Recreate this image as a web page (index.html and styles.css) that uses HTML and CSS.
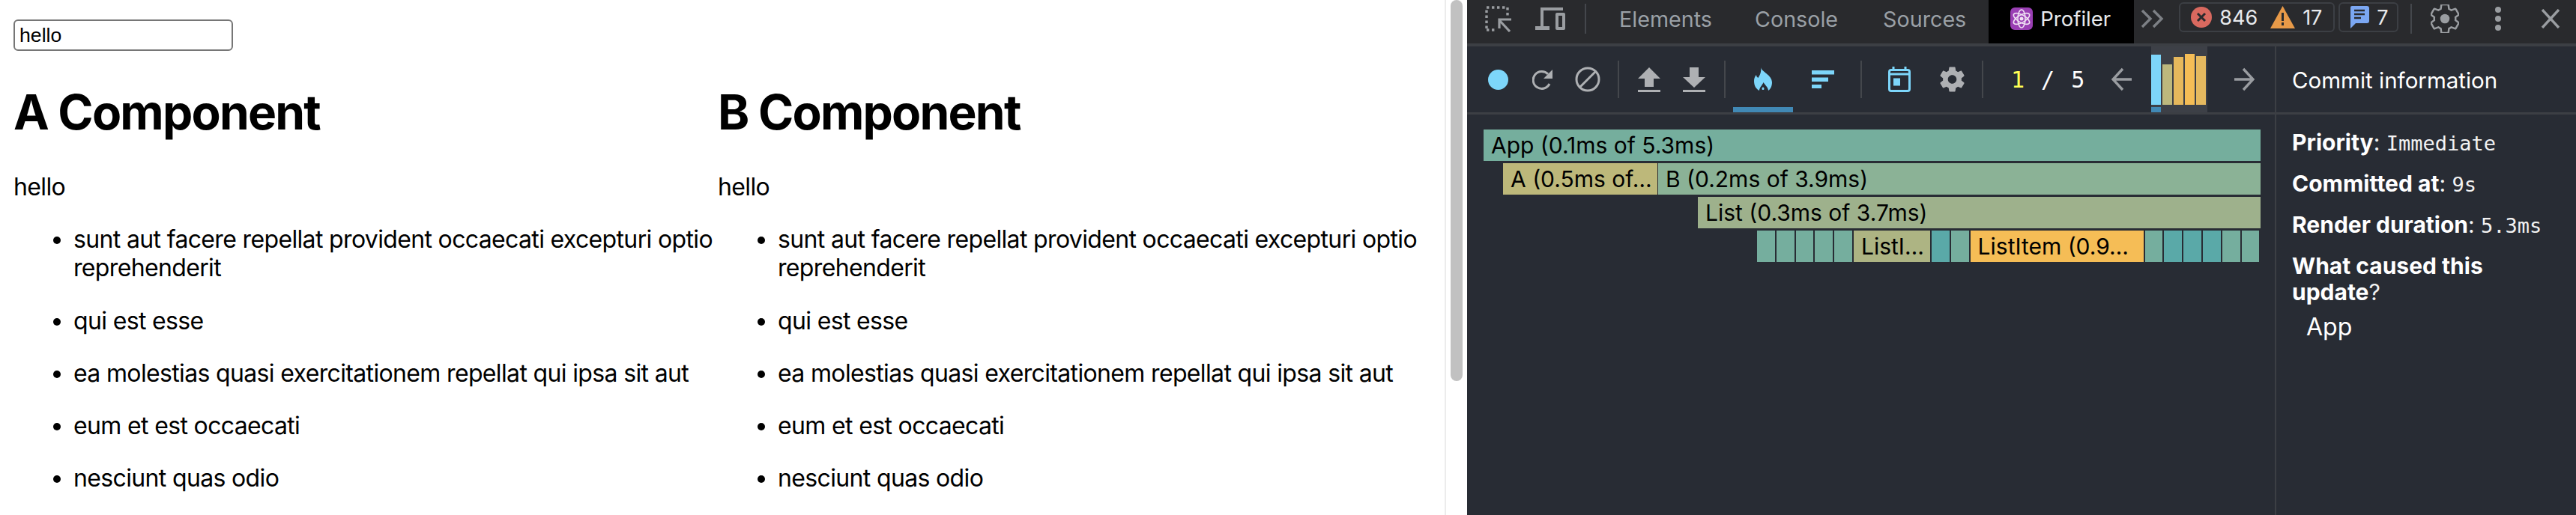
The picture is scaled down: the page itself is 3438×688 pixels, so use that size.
FILE: index.html
```html
<!DOCTYPE html>
<html lang="en">
<head>
  <meta charset="UTF-8">
  <title>Profiler</title>
  <link rel="stylesheet" href="styles.css">
</head>
<body>
<main class="page">
  <input class="search" type="text" value="hello">
  <div class="columns">
    <section>
      <h1>A Component</h1>
      <p>hello</p>
      <ul>
        <li><p>sunt aut facere repellat provident occaecati excepturi optio reprehenderit</p></li>
        <li><p>qui est esse</p></li>
        <li><p>ea molestias quasi exercitationem repellat qui ipsa sit aut</p></li>
        <li><p>eum et est occaecati</p></li>
        <li><p>nesciunt quas odio</p></li>
      </ul>
    </section>
    <section>
      <h1>B Component</h1>
      <p>hello</p>
      <ul>
        <li><p>sunt aut facere repellat provident occaecati excepturi optio reprehenderit</p></li>
        <li><p>qui est esse</p></li>
        <li><p>ea molestias quasi exercitationem repellat qui ipsa sit aut</p></li>
        <li><p>eum et est occaecati</p></li>
        <li><p>nesciunt quas odio</p></li>
      </ul>
    </section>
  </div>
</main>

<div class="scrollbar"><div class="thumb"></div></div>

<div class="devtools">
  <!-- top tab bar -->
  <div class="tabbar">
    <svg class="ic-inspect" width="36" height="36" viewBox="0 0 36 36">
      <path d="M2 31V3h28v11" fill="none" stroke="#9a9da1" stroke-width="3.4" stroke-dasharray="3.4 3.6"/>
      <path d="M2 33h11" fill="none" stroke="#9a9da1" stroke-width="3.4" stroke-dasharray="3.4 3.6"/>
      <path d="M33 35L19 20M19 31V19h16" fill="none" stroke="#9a9da1" stroke-width="3.2"/>
    </svg>
    <svg class="ic-device" width="40" height="30" viewBox="0 0 40 30">
      <path d="M0 25h19v5H0zM7 0h30v4H11v21H7z" fill="#9a9da1"/>
      <path d="M27 9a2 2 0 0 1 2-2h9a2 2 0 0 1 2 2v19a2 2 0 0 1-2 2h-9a2 2 0 0 1-2-2zM31 11v15h5V11z" fill="#9a9da1" fill-rule="evenodd"/>
    </svg>
    <span class="bar-sep sep-device"></span>
    <span class="tab tab-elements">Elements</span>
    <span class="tab tab-console">Console</span>
    <span class="tab tab-sources">Sources</span>
    <div class="tab-active">
      <svg width="30" height="30" viewBox="0 0 30 30">
        <rect width="30" height="30" rx="6" fill="#9a3fb4"/>
        <g fill="none" stroke="#f0e2f4" stroke-width="1.600">
          <ellipse cx="15" cy="15" rx="5" ry="12"/>
          <ellipse cx="15" cy="15" rx="5" ry="12" transform="rotate(60 15 15)"/>
          <ellipse cx="15" cy="15" rx="5" ry="12" transform="rotate(120 15 15)"/>
        </g>
        <circle cx="15" cy="15" r="2.500" fill="#f0e2f4"/>
      </svg>
      <span>Profiler</span>
    </div>
    <svg class="ic-more" width="31" height="26" viewBox="0 0 31 26">
      <path d="M2 2l11 11L2 24M17 2l11 11-11 11" fill="none" stroke="#7d8085" stroke-width="3.400"/>
    </svg>
    <div class="pill pill-errors">
      <svg width="28" height="28" viewBox="0 0 28 28">
        <circle cx="14" cy="14" r="14" fill="#d9695f"/>
        <path d="M9 9l10 10M19 9L9 19" stroke="#292a2d" stroke-width="3"/>
      </svg>
      <span class="count">846</span>
      <svg class="ic-warn" width="33" height="30" viewBox="0 0 33 30">
        <path d="M16.500 0L33 30H0z" fill="#e89a48"/>
        <path d="M16.500 9v11M16.500 22v4" stroke="#292a2d" stroke-width="3"/>
      </svg>
      <span class="count">17</span>
    </div>
    <div class="pill pill-info">
      <svg width="26" height="30" viewBox="0 0 26 30">
        <path d="M3 0h20a3 3 0 0 1 3 3v17a3 3 0 0 1-3 3H8l-7 7V2a2 2 0 0 1 2-2z" fill="#7ba7f2"/>
        <path d="M6 6h14M6 11h14M6 16h9" stroke="#292a2d" stroke-width="2.400"/>
      </svg>
      <span class="count">7</span>
    </div>
    <span class="bar-sep sep-pills"></span>
    <svg class="ic-settings" width="38" height="38" viewBox="2 2 20 20">
      <path d="M19.430 12.980c.040-.320.070-.640.070-.980s-.030-.660-.070-.980l2.110-1.650c.190-.150.240-.420.120-.640l-2-3.460c-.120-.220-.390-.300-.610-.220l-2.490 1c-.520-.400-1.080-.730-1.690-.980l-.380-2.650C14.460 2.180 14.250 2 14 2h-4c-.250 0-.460.180-.490.420l-.380 2.650c-.610.250-1.170.590-1.690.980l-2.490-1c-.230-.090-.490 0-.610.220l-2 3.460c-.130.220-.070.490.120.640l2.110 1.650c-.040.320-.070.650-.070.980s.030.660.070.980l-2.110 1.650c-.190.150-.240.420-.120.640l2 3.460c.120.220.390.300.610.220l2.490-1c.520.400 1.080.730 1.690.980l.380 2.650c.030.240.240.420.490.420h4c.250 0 .460-.180.490-.420l.380-2.650c.610-.250 1.170-.590 1.690-.980l2.490 1c.230.090.490 0 .610-.220l2-3.460c.120-.220.070-.490-.120-.640l-2.110-1.650z" fill="none" stroke="#9a9da1" stroke-width="1.300"/>
      <circle cx="12" cy="12" r="3.300" fill="#9a9da1"/>
    </svg>
    <svg class="ic-dots" width="8" height="32" viewBox="0 0 8 32">
      <circle cx="4" cy="4" r="4" fill="#9a9da1"/>
      <circle cx="4" cy="16" r="4" fill="#9a9da1"/>
      <circle cx="4" cy="28" r="4" fill="#9a9da1"/>
    </svg>
    <svg class="ic-close" width="26" height="26" viewBox="0 0 26 26">
      <path d="M2 1l22 24M24 1L2 25" stroke="#9a9da1" stroke-width="3.400"/>
    </svg>
  </div>

  <div class="profiler">
    <div class="left-pane">
      <!-- profiler toolbar -->
      <div class="toolbar">
        <div class="tool"><svg width="27" height="27" viewBox="0 0 27 27"><circle cx="13.500" cy="13.500" r="13.500" fill="#7dd6fa"/></svg></div>
        <div class="tool"><svg width="28" height="28" viewBox="0 0 28 28">
          <path d="M23 20a11.500 11.500 0 1 1-2-13" fill="none" stroke="#aeb0b3" stroke-width="3"/>
          <path d="M27 1v12H15z" fill="#aeb0b3"/>
        </svg></div>
        <div class="tool"><svg width="34" height="34" viewBox="0 0 34 34">
          <circle cx="17" cy="17" r="15" fill="none" stroke="#aeb0b3" stroke-width="3"/>
          <path d="M6 28L28 6" stroke="#aeb0b3" stroke-width="3"/>
        </svg></div>
        <span class="bar-sep sep-a"></span>
        <div class="tool"><svg width="30" height="33" viewBox="0 0 30 33">
          <path d="M15 0l15 15h-9v11H9V15H0z" fill="#aeb0b3"/>
          <rect y="30" width="30" height="3" fill="#aeb0b3"/>
        </svg></div>
        <div class="tool"><svg width="30" height="33" viewBox="0 0 30 33">
          <path d="M9 0h12v13h9L15 27 0 13h9z" fill="#aeb0b3"/>
          <rect y="30" width="30" height="3" fill="#aeb0b3"/>
        </svg></div>
        <span class="bar-sep sep-b"></span>
        <div class="tool tool-tab tool-current"><svg width="24" height="32" viewBox="0 0 24 32">
          <path d="M9 0c1 6 15 10 15 20 0 5-2 9-5 11 0-4-4-7-6.500-11C11 24 7 27 7 31 3 29 0 25 0 18c0-3 1-6 3-8 0 2 1 3 2.500 4C8 10 10 6 9 0z" fill="#7dd6fa"/>
          <path d="M12 26c.600 1 1.500 1.500 1.500 2.500s-.600 1.500-1.500 1.500-1.500-.500-1.500-1.500.900-1.500 1.500-2.500z" fill="#7dd6fa"/>
        </svg></div>
        <div class="tool tool-tab"><svg width="30" height="24" viewBox="0 0 30 24">
          <rect width="30" height="5.500" fill="#7dd6fa"/>
          <rect y="9.500" width="22" height="5.500" fill="#7dd6fa"/>
          <rect y="19" width="13" height="5.500" fill="#7dd6fa"/>
        </svg></div>
        <span class="bar-sep sep-c"></span>
        <div class="tool tool-cal"><svg width="30" height="34" viewBox="0 0 30 34">
          <rect x="1.500" y="4.500" width="27" height="28" rx="2.500" fill="none" stroke="#7dd6fa" stroke-width="3"/>
          <path d="M7 0v5M23 0v5M2 10h26" stroke="#7dd6fa" stroke-width="3"/>
          <rect x="7" y="15.500" width="9" height="10" fill="#7dd6fa"/>
        </svg></div>
        <div class="tool tool-gear"><svg width="33" height="34" viewBox="2 2 20 20">
          <path fill-rule="evenodd" d="M19.430 12.980c.040-.320.070-.640.070-.980s-.030-.660-.070-.980l2.110-1.650c.190-.150.240-.420.120-.640l-2-3.460c-.120-.220-.390-.300-.610-.220l-2.490 1c-.520-.400-1.080-.730-1.690-.980l-.380-2.650C14.460 2.180 14.250 2 14 2h-4c-.250 0-.460.180-.490.420l-.380 2.650c-.610.250-1.170.590-1.690.980l-2.490-1c-.230-.090-.490 0-.610.220l-2 3.460c-.130.220-.070.490.120.640l2.110 1.650c-.040.320-.070.650-.070.980s.030.660.070.980l-2.110 1.650c-.190.150-.240.420-.120.640l2 3.460c.120.220.390.300.610.220l2.490-1c.520.400 1.080.730 1.690.980l.380 2.650c.030.240.240.420.490.420h4c.250 0 .460-.180.490-.420l.380-2.650c.610-.250 1.170-.590 1.690-.980l2.490 1c.230.090.490 0 .610-.220l2-3.460c.120-.220.070-.490-.120-.640l-2.110-1.650zM12 15.500c-1.930 0-3.500-1.570-3.500-3.500s1.570-3.500 3.500-3.500 3.500 1.570 3.500 3.500-1.570 3.500-3.500 3.500z" fill="#aeb0b3"/>
        </svg></div>
        <span class="bar-sep sep-d"></span>
        <div class="commit-count"><span class="current">1</span><span>/</span><span>5</span></div>
        <svg class="ic-prev" width="27" height="32" viewBox="0 0 27 32">
          <path d="M27 16H3M15 2L2 16l13 14" fill="none" stroke="#9a9da1" stroke-width="3.400"/>
        </svg>
        <div class="commit-chart">
          <div class="commit-bars">
            <span class="selected" style="height:67px"></span>
            <span style="height:54px;background:#bdb87d"></span>
            <span style="height:64px;background:#e6b85c"></span>
            <span style="height:68px;background:#f5bd56"></span>
            <span style="height:65px;background:#e5b95f"></span>
          </div>
          <div class="commit-mark"></div>
        </div>
        <svg class="ic-next" width="27" height="32" viewBox="0 0 27 32">
          <path d="M0 16h24M12 2l13 14-13 14" fill="none" stroke="#9a9da1" stroke-width="3.400"/>
        </svg>
      </div>

      <!-- flame graph -->
      <div class="flame">
        <div class="flame-row row-app">
          <div class="node" style="width:1037px;background:#75ae9d">App (0.1ms of 5.3ms)</div>
        </div>
        <div class="flame-row row-ab">
          <div class="node" style="width:206px;background:#bdb87a">A (0.5ms of…</div>
          <div class="node" style="width:804px;background:#8bb296">B (0.2ms of 3.9ms)</div>
        </div>
        <div class="flame-row row-list">
          <div class="node" style="width:751px;background:#9eb18c">List (0.3ms of 3.7ms)</div>
        </div>
        <div class="flame-row row-items">
          <div class="node small" style="background:#75ae9e"></div>
          <div class="node small" style="background:#75ae9e"></div>
          <div class="node small" style="background:#75ae9e"></div>
          <div class="node small" style="background:#75ae9e"></div>
          <div class="node small" style="background:#75ae9e"></div>
          <div class="node" style="width:102px;background:#adb483">ListI…</div>
          <div class="node small" style="background:#5aa9a8"></div>
          <div class="node small" style="background:#75ae9e"></div>
          <div class="node" style="width:231px;background:#f5bd56">ListItem (0.9…</div>
          <div class="node small" style="background:#75ae9e"></div>
          <div class="node small" style="background:#5aa9a8"></div>
          <div class="node small" style="background:#5aa9a8"></div>
          <div class="node small" style="background:#5aa9a8"></div>
          <div class="node small" style="background:#75ae9e"></div>
          <div class="node small" style="background:#75ae9e"></div>
        </div>
      </div>
    </div>

    <!-- commit sidebar -->
    <aside class="sidebar">
      <div class="sidebar-head">Commit information</div>
      <div class="sidebar-body">
        <div class="info"><b>Priority</b>: <code>Immediate</code></div>
        <div class="info"><b>Committed at</b>: <code>9s</code></div>
        <div class="info"><b>Render duration</b>: <code>5.3ms</code></div>
        <div class="info cause"><b>What caused this update</b>?</div>
        <div class="cause-item">App</div>
      </div>
    </aside>
  </div>
</div>
</body>
</html>
```

FILE: styles.css
```css
html, body {
  margin: 0;
  height: 688px;
  overflow: hidden;
}
body {
  display: flex;
  font-family: Inter, "Noto Sans", sans-serif;
  background: #fff;
  color: #000;
}

/* inspected page */
.page {
  box-sizing: border-box;
  width: 1928px;
  height: 688px;
  padding: 26px 0 0 18px;
  overflow: hidden;
  font-size: 32px;
  line-height: 38.2px;
  letter-spacing: -0.65px;
}
.search {
  display: block;
  box-sizing: border-box;
  width: 293px;
  height: 42px;
  padding: 2px 6px;
  border: 2px solid #767676;
  border-radius: 6px;
  font-family: "Liberation Sans", Arial, sans-serif;
  font-size: 26.67px;
  letter-spacing: 0;
}
.columns {
  display: grid;
  grid-template-columns: 940px 940px;
}
h1 {
  margin: 43px 0;
  font-size: 64px;
  line-height: 77px;
  letter-spacing: -1.8px;
}
p {
  margin: 32px 0;
}
ul {
  margin: 32px 0;
  padding-left: 80px;
}

.scrollbar {
  box-sizing: border-box;
  width: 30px;
  height: 688px;
  padding-left: 6px;
  border-left: 2px solid #ececec;
}
.thumb {
  width: 16px;
  height: 509px;
  border-radius: 8px;
  background: #c1c1c1;
}

/* devtools */
.devtools {
  flex: 1;
  height: 688px;
  background: #282c34;
  color: #fff;
  font-size: 28.7px;
}
.tabbar {
  display: flex;
  align-items: center;
  box-sizing: border-box;
  height: 62px;
  padding-bottom: 8px;
  background: #292a2d;
  border-bottom: 4px solid #3c3f44;
}
.bar-sep {
  flex: none;
  width: 2px;
  background: #44474c;
}
.ic-inspect { margin-left: 24px; }
.ic-device { margin-left: 31px; }
.sep-device { height: 40px; margin-left: 26px; }
.tab { color: #9aa0a6; }
.tab-elements { margin-left: 44px; }
.tab-console { margin-left: 57px; }
.tab-sources { margin-left: 60px; }
.tab-active {
  display: flex;
  flex: none;
  align-items: center;
  align-self: flex-start;
  gap: 10px;
  box-sizing: border-box;
  width: 194px;
  height: 58px;
  margin: 0 0 -8px 30px;
  padding: 0 0 8px 29px;
  background: #000;
  color: #e8eaed;
  font-size: 27.5px;
}
.ic-more { margin-left: 9px; }
.pill {
  display: flex;
  flex: none;
  align-items: center;
  box-sizing: border-box;
  height: 40px;
  border: 2px solid #3c3f44;
  border-radius: 6px;
  margin-top: -4px;
  color: #e8eaed;
  font-size: 27px;
}
.pill-errors { width: 208px; margin-left: 20px; padding-left: 14px; }
.pill-info { width: 80px; margin-left: 5px; padding-left: 13px; }
.count { margin-left: 10px; }
.ic-warn { margin-left: 17px; }
.sep-pills { height: 40px; margin-left: 16px; }
.ic-settings { margin-left: 25px; }
.ic-dots { margin-left: 48px; }
.ic-close { margin-left: 53px; }

.profiler {
  display: flex;
  height: 626px;
}
.left-pane {
  width: 1078px;
  border-right: 2px solid #3c3f44;
}
.toolbar {
  display: flex;
  align-items: center;
  box-sizing: border-box;
  height: 91px;
  padding-left: 11px;
  border-bottom: 3px solid #3c3f44;
}
.toolbar .bar-sep { height: 50px; }
.tool {
  display: flex;
  flex: none;
  align-items: center;
  justify-content: center;
  box-sizing: border-box;
  width: 60px;
  height: 88px;
}
.sep-a { margin: 0 10px; }
.sep-b { margin: 0 10px; }
.sep-c { margin: 0 10px; }
.sep-d { margin: 0 37px 0 10px; }
.tool-tab { width: 80px; }
.tool-current { border-bottom: 7px solid #4189b5; padding-top: 7px; }
.tool-cal { margin-left: 10px; }
.tool-gear { margin-left: 10px; }
.commit-count {
  display: flex;
  flex: none;
  gap: 22px;
  font-family: "DejaVu Sans Mono", monospace;
  font-size: 30px;
}
.commit-count .current { color: #ffff55; }
.ic-prev { flex: none; margin-left: 36px; }
.commit-chart {
  flex: none;
  width: 75px;
  height: 88px;
  margin-left: 26px;
  background: #3d4047;
}
.commit-bars {
  display: flex;
  align-items: flex-end;
  gap: 2px;
  height: 78px;
}
.commit-bars span {
  flex: none;
  width: 13px;
}
.commit-bars .selected { background: #7dd6fa; }
.commit-mark {
  width: 13px;
  height: 7px;
  margin-top: 3px;
  background: #4189b5;
}
.ic-next { flex: none; margin-left: 36px; }

.flame {
  display: flex;
  flex-direction: column;
  gap: 3px;
  padding: 20px 0 0 22px;
}
.flame-row {
  display: flex;
  gap: 2px;
  height: 42px;
}
.row-ab { margin-left: 26px; gap: 1px; }
.row-list { margin-left: 286px; }
.row-items { margin-left: 365px; }
.node {
  box-sizing: border-box;
  flex: none;
  height: 42px;
  padding: 0 10px;
  overflow: hidden;
  color: #000;
  font-size: 30px;
  line-height: 42px;
  white-space: nowrap;
}
.node.small {
  width: 23.8px;
  padding: 0;
}

.sidebar {
  flex: 1;
  overflow: hidden;
}
.sidebar-head {
  box-sizing: border-box;
  height: 91px;
  padding: 27px 0 0 21px;
  border-bottom: 3px solid #3c3f44;
  font-size: 29.5px;
}
.sidebar-body {
  padding: 20px 21px 0;
  font-size: 30px;
}
.info {
  margin-bottom: 20px;
  line-height: 35px;
  color: #f2f2f2;
}
.info b { color: #fff; }
code {
  font-family: "DejaVu Sans Mono", monospace;
  font-size: 27px;
  line-height: 1;
}
.cause { margin-bottom: 9px; }
.cause-item {
  margin-left: 19px;
  font-size: 32px;
  line-height: 39px;
}
```
